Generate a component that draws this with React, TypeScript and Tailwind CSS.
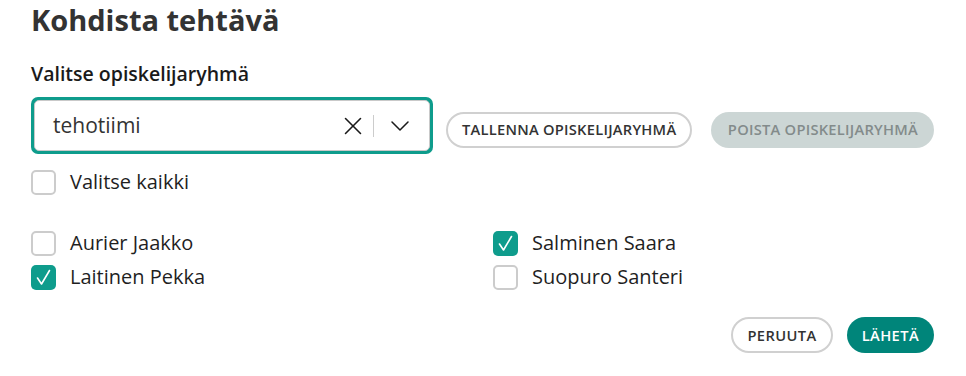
import { X, ChevronDown } from 'lucide-react';

const students = [
  { name: 'Aurier Jaakko', checked: false },
  { name: 'Salminen Saara', checked: true },
  { name: 'Laitinen Pekka', checked: true },
  { name: 'Suopuro Santeri', checked: false },
];

function Checkbox({ checked, label }: { checked: boolean; label: string }) {
  return (
    <label className="flex items-center gap-[14px] h-[34px]">
      {checked ? (
        <span className="w-[25px] h-[25px] rounded-[5px] bg-[#0e9c8c] flex items-center justify-center">
          <svg width="17" height="17" viewBox="0 0 17 17" fill="none">
            <path d="M2.5 9 L6.5 15 L14.5 1.5" stroke="white" strokeWidth="1.6" strokeLinecap="round" strokeLinejoin="round" />
          </svg>
        </span>
      ) : (
        <span className="w-[25px] h-[25px] rounded-[5px] border-2 border-[#cccccc] bg-white" />
      )}
      <span className="text-[20px] text-[#1f1f1f] leading-[26px]">{label}</span>
    </label>
  );
}

export default function App() {
  return (
    <div className="w-[966px] h-[376px] bg-white pl-[31px] pr-[32px] pt-[0px] font-['Open_Sans',sans-serif]">
      <h1 className="text-[29px] font-bold text-[#333333] leading-[40px]">Kohdista tehtävä</h1>

      <p className="mt-[20px] text-[19.5px] font-semibold text-[#1a1a1a] leading-[28px]">Valitse opiskelijaryhmä</p>

      <div className="mt-[9px] flex items-center">
        <div className="w-[402px] h-[57px] shrink-0 rounded-[7px] bg-[#0e9c8c] p-[3px]">
          <div className="h-full rounded-[5px] border border-[#c9c9c9] bg-white flex items-center pl-[18px] pr-[13px]">
            <span className="flex-1 text-[21px] text-[#333333]">tehotiimi</span>
            <X size={30} strokeWidth={1.25} className="text-[#1a1a1a] mr-[5px]" />
            <span className="w-px h-[22px] bg-[#cccccc]" />
            <ChevronDown size={32} strokeWidth={1.15} className="text-[#1a1a1a] ml-[10px]" />
          </div>
        </div>

        <button className="ml-[13px] mt-[8px] h-[36px] px-[14px] shrink-0 whitespace-nowrap rounded-full border-2 border-[#d0d0d0] text-[14.7px] font-semibold text-[#333333] tracking-[0.25px]">
          TALLENNA OPISKELIJARYHMÄ
        </button>
        <button className="ml-[19px] mt-[8px] h-[36px] px-[16.5px] shrink-0 whitespace-nowrap rounded-full bg-[#ccd6d5] text-[14.7px] font-semibold text-[#838b8b] tracking-[0.25px]">
          POISTA OPISKELIJARYHMÄ
        </button>
      </div>

      <div className="mt-[11px]">
        <Checkbox checked={false} label="Valitse kaikki" />
      </div>

      <div className="mt-[27px] grid grid-cols-[462px_1fr]">
        {students.map(s => (
          <Checkbox key={s.name} checked={s.checked} label={s.name} />
        ))}
      </div>

      <div className="mt-[23px] flex justify-end gap-[14px]">
        <button className="h-[36px] px-[14px] whitespace-nowrap rounded-full border-2 border-[#d0d0d0] text-[14.7px] font-semibold text-[#333333] tracking-[0.4px]">
          PERUUTA
        </button>
        <button className="h-[36px] px-[15px] whitespace-nowrap rounded-full bg-[#00857a] text-[14.7px] font-semibold text-white tracking-[0.4px]">
          LÄHETÄ
        </button>
      </div>
    </div>
  );
}
